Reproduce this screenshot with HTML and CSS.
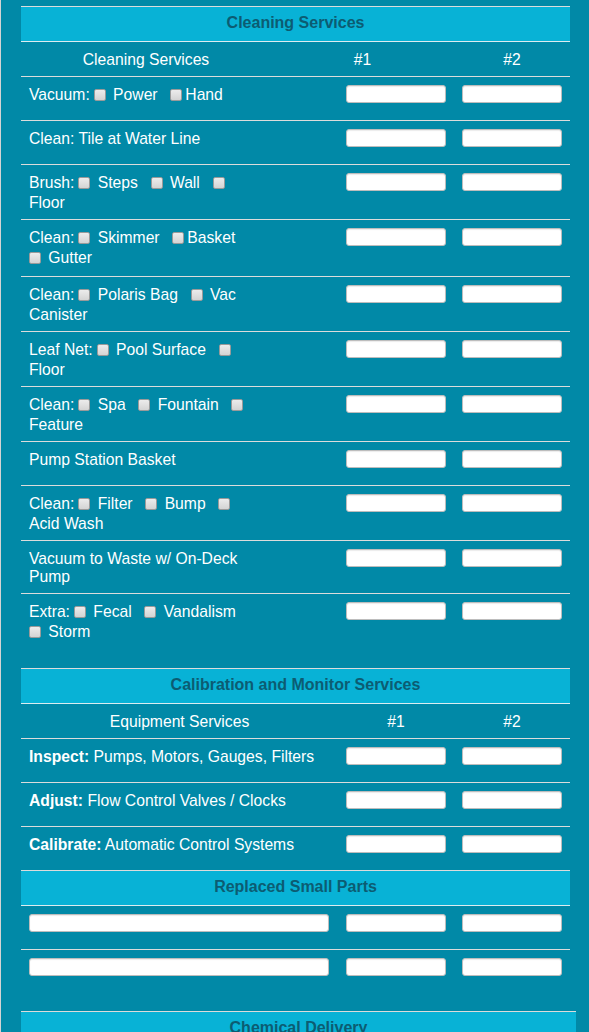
FILE: index.html
```html
<!DOCTYPE html>
<html lang="en">
<head>
<meta charset="utf-8">
<title>Service Report</title>
<link rel="stylesheet" href="styles.css">
</head>
<body>
<div class="page">

  <section class="sheet sheet-cleaning">
    <h2 class="sheet-title">Cleaning Services</h2>
    <div class="row colhead"><div class="cell">Cleaning Services</div><div class="cell">#1</div><div class="cell">#2</div></div>

    <div class="row"><div class="cell label">Vacuum:<input class="cb" type="checkbox"> Power &nbsp;<input class="cb" type="checkbox">Hand</div><div class="cell"><input class="field" type="text"></div><div class="cell"><input class="field" type="text"></div></div>
    <div class="row"><div class="cell label">Clean: Tile at Water Line</div><div class="cell"><input class="field" type="text"></div><div class="cell"><input class="field" type="text"></div></div>
    <div class="row"><div class="cell label">Brush:<input class="cb" type="checkbox"> Steps &nbsp;<input class="cb" type="checkbox"> Wall &nbsp;<input class="cb" type="checkbox"><br>Floor</div><div class="cell"><input class="field" type="text"></div><div class="cell"><input class="field" type="text"></div></div>
    <div class="row"><div class="cell label">Clean:<input class="cb" type="checkbox"> Skimmer &nbsp;<input class="cb" type="checkbox">Basket<br><input class="cb first" type="checkbox"> Gutter</div><div class="cell"><input class="field" type="text"></div><div class="cell"><input class="field" type="text"></div></div>
    <div class="row"><div class="cell label">Clean:<input class="cb" type="checkbox"> Polaris Bag &nbsp;<input class="cb" type="checkbox"> Vac<br>Canister</div><div class="cell"><input class="field" type="text"></div><div class="cell"><input class="field" type="text"></div></div>
    <div class="row"><div class="cell label">Leaf Net:<input class="cb" type="checkbox"> Pool Surface &nbsp;<input class="cb" type="checkbox"><br>Floor</div><div class="cell"><input class="field" type="text"></div><div class="cell"><input class="field" type="text"></div></div>
    <div class="row"><div class="cell label">Clean:<input class="cb" type="checkbox"> Spa &nbsp;<input class="cb" type="checkbox"> Fountain &nbsp;<input class="cb" type="checkbox"><br>Feature</div><div class="cell"><input class="field" type="text"></div><div class="cell"><input class="field" type="text"></div></div>
    <div class="row"><div class="cell label">Pump Station Basket</div><div class="cell"><input class="field" type="text"></div><div class="cell"><input class="field" type="text"></div></div>
    <div class="row"><div class="cell label">Clean:<input class="cb" type="checkbox"> Filter &nbsp;<input class="cb" type="checkbox"> Bump &nbsp;<input class="cb" type="checkbox"><br>Acid Wash</div><div class="cell"><input class="field" type="text"></div><div class="cell"><input class="field" type="text"></div></div>
    <div class="row"><div class="cell label">Vacuum to Waste w/ On-Deck<br>Pump</div><div class="cell"><input class="field" type="text"></div><div class="cell"><input class="field" type="text"></div></div>
    <div class="row"><div class="cell label">Extra:<input class="cb" type="checkbox"> Fecal &nbsp;<input class="cb" type="checkbox"> Vandalism<br><input class="cb first" type="checkbox"> Storm</div><div class="cell"><input class="field" type="text"></div><div class="cell"><input class="field" type="text"></div></div>
  </section>

  <section class="sheet sheet-equipment">
    <h2 class="sheet-title">Calibration and Monitor Services</h2>
    <div class="row colhead"><div class="cell">Equipment Services</div><div class="cell">#1</div><div class="cell">#2</div></div>
    <div class="row"><div class="cell label"><b>Inspect:</b> Pumps, Motors, Gauges, Filters</div><div class="cell"><input class="field" type="text"></div><div class="cell"><input class="field" type="text"></div></div>
    <div class="row"><div class="cell label"><b>Adjust:</b> Flow Control Valves / Clocks</div><div class="cell"><input class="field" type="text"></div><div class="cell"><input class="field" type="text"></div></div>
    <div class="row"><div class="cell label"><b>Calibrate:</b> Automatic Control Systems</div><div class="cell"><input class="field" type="text"></div><div class="cell"><input class="field" type="text"></div></div>

    <h2 class="sheet-title">Replaced Small Parts</h2>
    <div class="row"><div class="cell"><input class="field field-wide" type="text"></div><div class="cell"><input class="field" type="text"></div><div class="cell"><input class="field" type="text"></div></div>
    <div class="row"><div class="cell"><input class="field field-wide" type="text"></div><div class="cell"><input class="field" type="text"></div><div class="cell"><input class="field" type="text"></div></div>
  </section>

  <section class="sheet sheet-chemical">
    <h2 class="sheet-title">Chemical Delivery</h2>
    <div class="row colhead"><div class="cell">Chemical</div><div class="cell">#1</div><div class="cell">#2</div></div>
  </section>

</div>
</body>
</html>
```

FILE: styles.css
```css
html, body {
  margin: 0;
  padding: 0;
}

body {
  background: #0189a7;
  color: #ffffff;
  font-family: "Liberation Sans", Arial, sans-serif;
  font-size: 15.7px;
  line-height: normal;
  border-left: 1px solid #d4d4d4;
  min-height: 100vh;
  box-sizing: border-box;
}

.page {
  padding: 6px 0 0 20px;
}

.sheet {
  width: 549px;
  margin-bottom: 18px;
}

.sheet-chemical {
  width: 555px;
}

.sheet-title {
  margin: 0;
  height: 36px;
  line-height: 32px;
  padding-bottom: 2px;
  box-sizing: border-box;
  background: #08b2d6;
  color: #0c5c72;
  font-size: 16px;
  font-weight: bold;
  text-align: center;
  border-top: 1px solid #dcdcdc;
  border-bottom: 1px solid #dcecf0;
}

.row {
  display: grid;
  grid-template-columns: 317px 116px 116px;
  padding: 9px 0 7px;
}

.sheet-cleaning .row {
  grid-template-columns: 250px 183px 116px;
}

.sheet-chemical .row {
  grid-template-columns: 323px 116px 116px;
}

.row + .row {
  border-top: 1px solid #dcdcdc;
}

.cell {
  padding: 0 8px;
  display: flex;
  justify-content: flex-end;
  align-items: flex-start;
}

.row .cell:first-child {
  justify-content: flex-start;
}

.colhead .cell,
.colhead .cell:first-child {
  justify-content: center;
}

.label {
  display: block;
  white-space: nowrap;
}

.cb {
  appearance: none;
  -webkit-appearance: none;
  display: inline-block;
  width: 12px;
  height: 12px;
  margin: 0 3px 5px 4px;
  padding: 0;
  vertical-align: -6px;
  box-sizing: border-box;
  border: 1px solid #9a9a9a;
  border-radius: 2px;
  background: linear-gradient(#ececec, #d4d4d4);
}

.cb.first {
  margin-left: 0;
}

.field {
  display: block;
  width: 100px;
  height: 18px;
  margin: -1px 0 10px 0;
  padding: 0;
  box-sizing: border-box;
  border: 1px solid #bdbdbd;
  border-radius: 3px;
  background: #ffffff;
  box-shadow: inset 0 1px 1px rgba(0, 0, 0, 0.08);
}

.field-wide {
  width: 300px;
}
```
